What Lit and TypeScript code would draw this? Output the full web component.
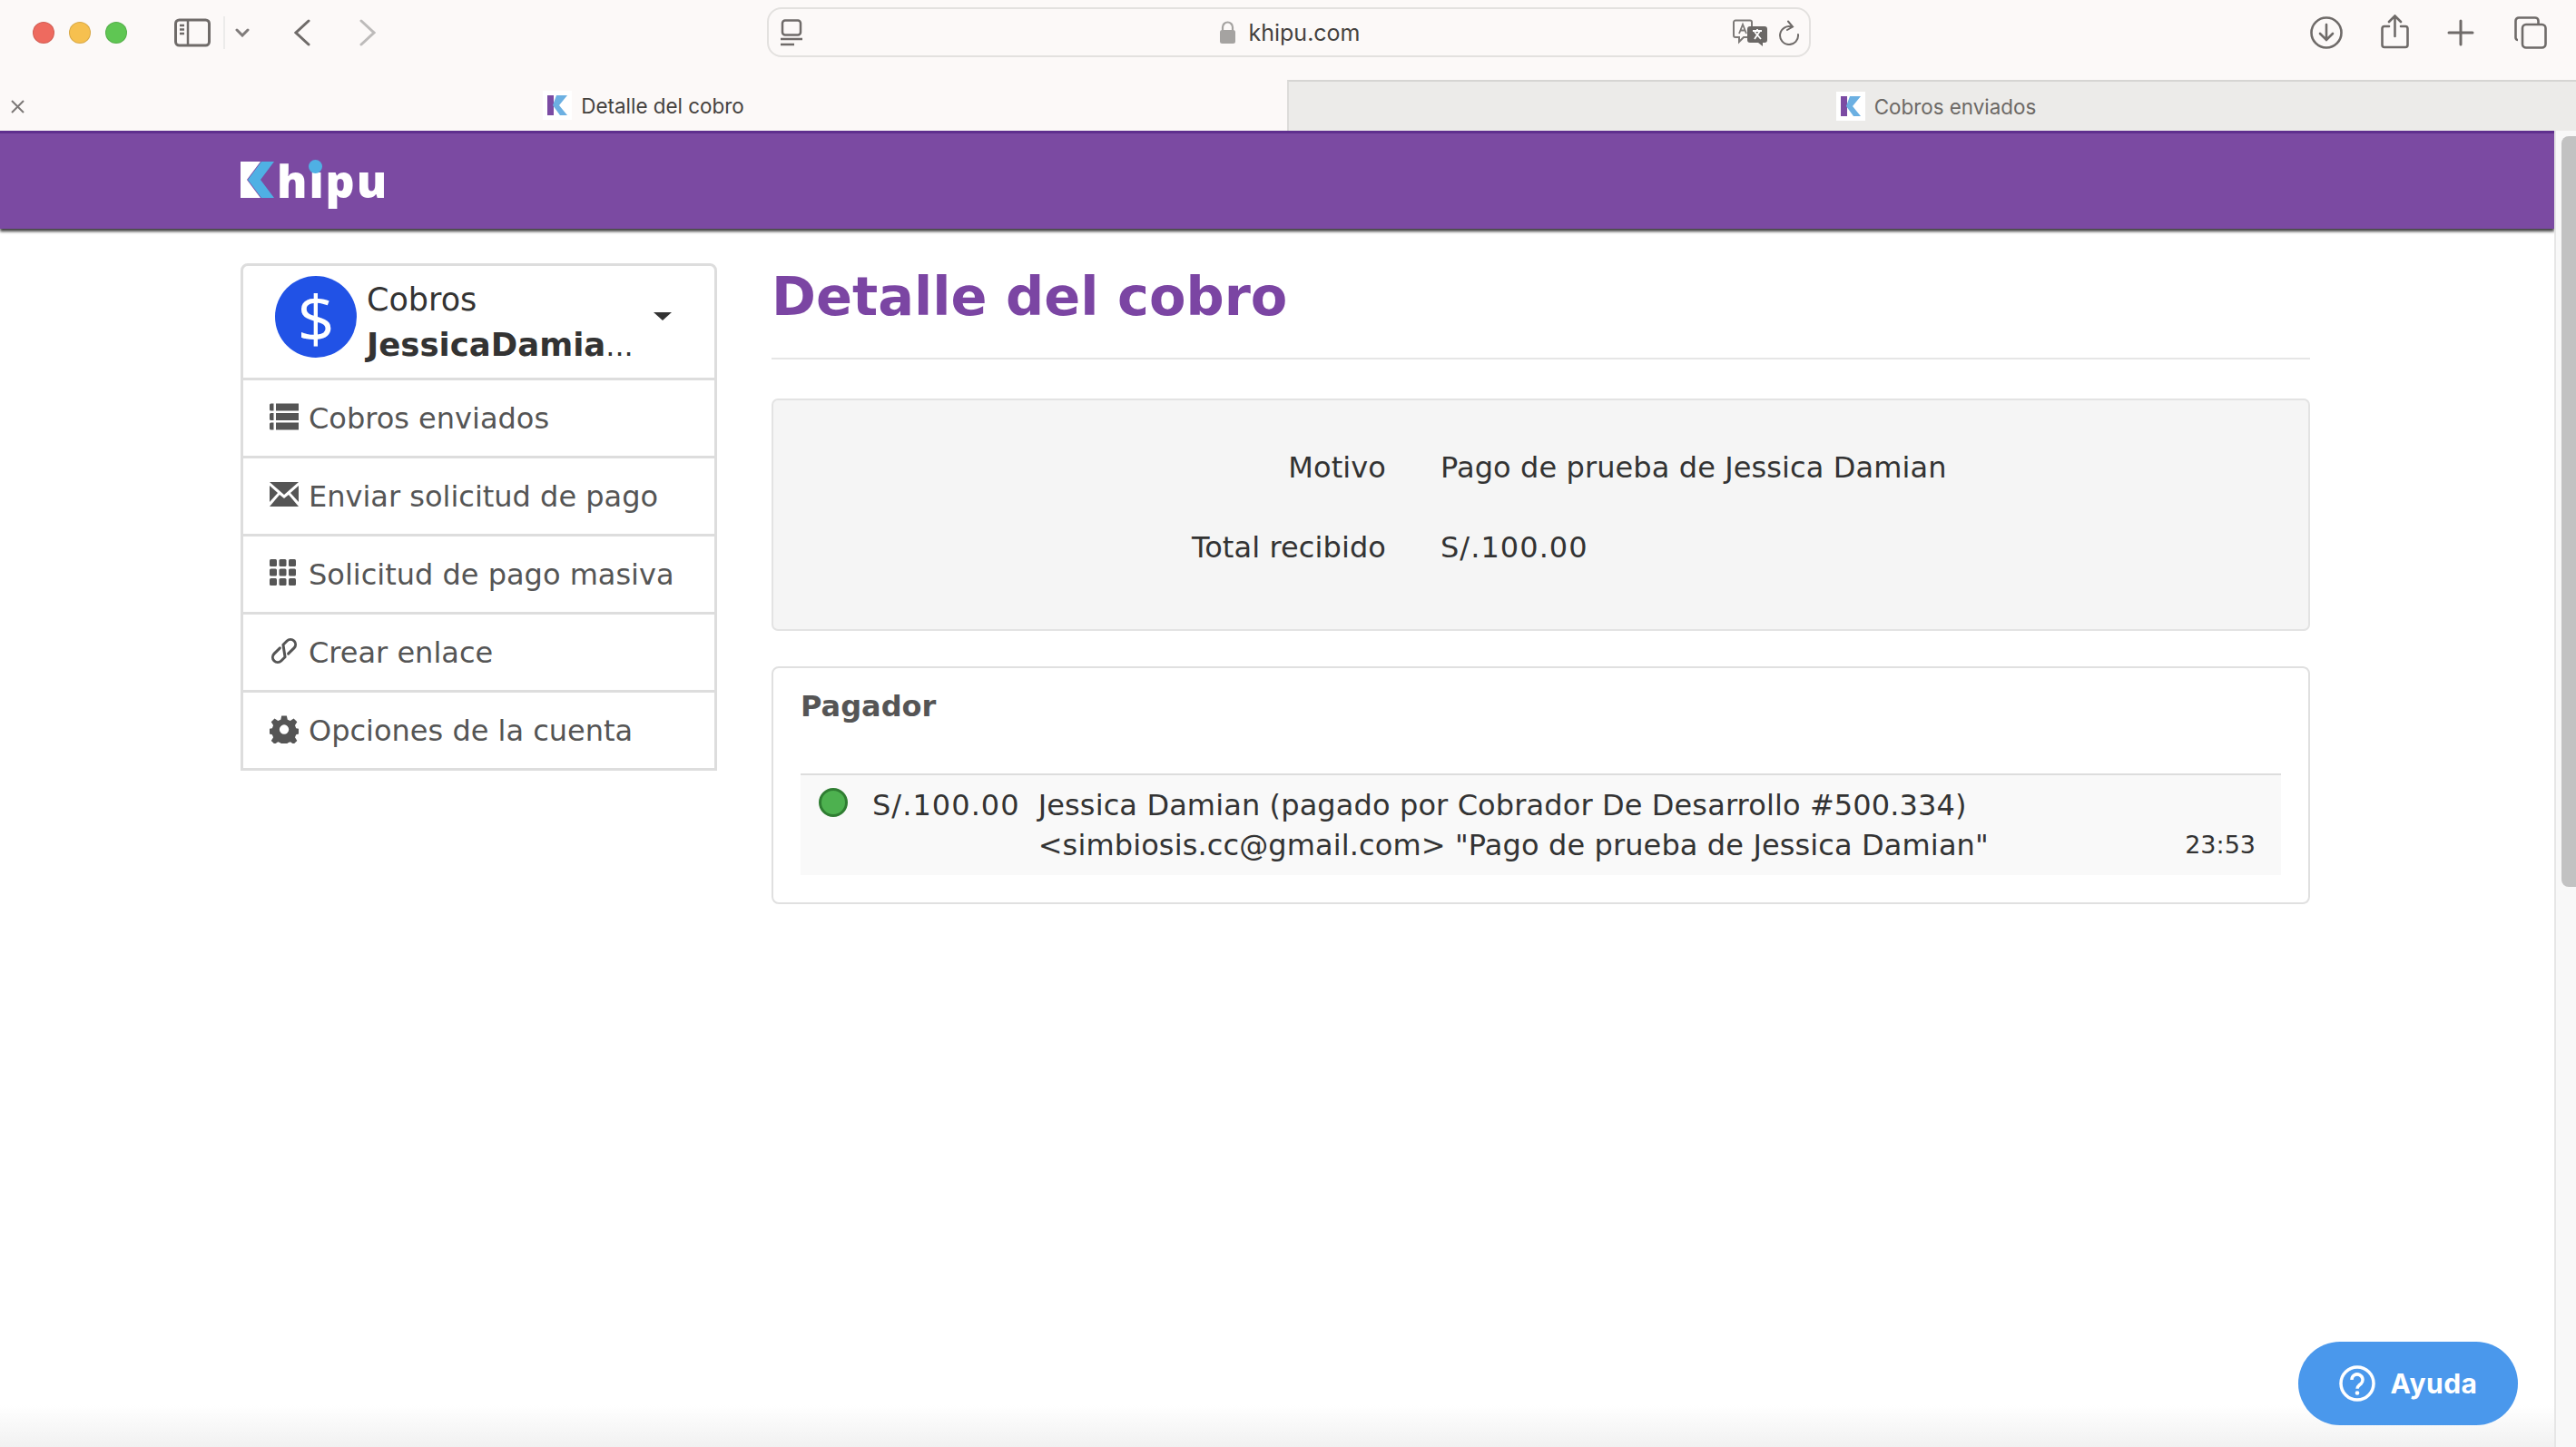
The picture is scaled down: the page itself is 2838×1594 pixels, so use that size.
import { LitElement, html, css, svg } from 'lit';
import { customElement } from 'lit/decorators.js';

const favicon = html`<svg class="favicon" viewBox="0 0 32 32">
  <rect width="32" height="32" fill="#fff"></rect>
  <path d="M5 5h7v22H5z" fill="#7b4ba3"></path>
  <path d="M15 5h12l-9 11 9 11h-8L11 16z" fill="#6cb0e2"></path>
</svg>`;

const menu = [
  {
    label: 'Cobros enviados',
    icon: svg`<path d="M0 1.5a1.500 1.500 0 0 1 1.500-1.500h3v8h-3A1.500 1.500 0 0 1 0 6.500zM7 0h25v8H7zM0 12a1.500 1.500 0 0 1 1.500-1.500h3v8h-3A1.500 1.500 0 0 1 0 17zM7 10.500h25v8H7zM0 22.500a1.500 1.500 0 0 1 1.500-1.500h3v8h-3A1.500 1.500 0 0 1 0 27.500zM7 21h25v8H7z" transform="translate(0 1.500)"></path>`,
  },
  {
    label: 'Enviar solicitud de pago',
    icon: svg`<path d="M0 2h32L16 16zM0 6l9 8-9 10zM32 6l-9 8 9 10zM11 16l5 4 5-4 11 13H0z"></path>`,
  },
  {
    label: 'Solicitud de pago masiva',
    icon: svg`<g><rect x="0" y="1" width="8" height="8" rx="1.500"></rect><rect x="10.500" y="1" width="8" height="8" rx="1.500"></rect><rect x="21" y="1" width="8" height="8" rx="1.500"></rect><rect x="0" y="11.500" width="8" height="8" rx="1.500"></rect><rect x="10.500" y="11.500" width="8" height="8" rx="1.500"></rect><rect x="21" y="11.500" width="8" height="8" rx="1.500"></rect><rect x="0" y="22" width="8" height="8" rx="1.500"></rect><rect x="10.500" y="22" width="8" height="8" rx="1.500"></rect><rect x="21" y="22" width="8" height="8" rx="1.500"></rect></g>`,
  },
  {
    label: 'Crear enlace',
    icon: svg`<g transform="rotate(-45 16 16)" fill="none" stroke="currentColor" stroke-width="3" stroke-linecap="round" stroke-linejoin="round"><path d="M15 10.500H6a5.500 5.500 0 0 0 0 11h6l8-11h6a5.500 5.500 0 0 1 0 11h-9"></path></g>`,
  },
  {
    label: 'Opciones de la cuenta',
    icon: svg`<path fill-rule="evenodd" d="M13 0h6l1 4.500 3.200 1.300 4-2.500 4 4-2.500 4 1.300 3.200 4.500 1v5.500l-4.500 1-1.300 3.200 2.500 4-4 4-4-2.500-3.200 1.300-1 4.500h-6l-1-4.500-3.200-1.300-4 2.500-4-4 2.500-4-1.300-3.200-4.500-1v-5.500l4.500-1 1.300-3.200-2.500-4 4-4 4 2.500L12 4.500zM16 10.500a5.500 5.500 0 1 0 0 11 5.500 5.500 0 0 0 0-11z" transform="translate(1 1.500) scale(.94)"></path>`,
  },
];

@customElement('app-root')
export class AppRoot extends LitElement {
  static styles = css`
    :host {
      display: block;
      width: 2838px;
      height: 1594px;
      position: relative;
      overflow: hidden;
      background: #fff;
      font-family: 'DejaVu Sans', Verdana, sans-serif;
      color: #333;
    }

    .toolbar {
      height: 88px;
      background: #fcf9f8;
      display: flex;
      align-items: flex-start;
    }
    .left-tools {
      width: 845px;
      height: 72px;
      padding-left: 36px;
      box-sizing: border-box;
      display: flex;
      align-items: center;
    }
    .lights { display: flex; gap: 16px; }
    .light {
      width: 24px;
      height: 24px;
      border-radius: 50%;
      box-sizing: border-box;
      border: 1px solid rgba(0, 0, 0, 0.12);
    }
    .red { background: #ee6a5f; }
    .yellow { background: #f6c04f; }
    .green { background: #5fc653; }
    .tool { color: #6f6b69; fill: none; stroke: currentColor; flex: none; }
    .sidebar-btn { width: 40px; height: 32px; margin-left: 52px; }
    .sep { width: 2px; height: 36px; background: #ecebea; margin-left: 14px; }
    .chev { width: 16px; height: 10px; margin-left: 11px; color: #807c7b; }
    .back { width: 18px; height: 30px; margin-left: 49px; }
    .forward { width: 18px; height: 30px; margin-left: 54px; color: #bdbbba; }

    .address {
      width: 1150px;
      height: 55px;
      margin-top: 8px;
      box-sizing: border-box;
      border: 2px solid #e3e1df;
      border-radius: 16px;
      display: grid;
      grid-template-columns: 1fr auto 1fr;
      align-items: center;
      padding: 0 10px 0 12px;
      font-family: Inter, 'Liberation Sans', sans-serif;
      font-size: 25px;
      color: #45423f;
    }
    .address-left { display: flex; }
    .address-center { display: flex; align-items: center; gap: 13px; }
    .address-right { display: flex; justify-content: flex-end; align-items: center; gap: 12px; }
    .reader { width: 26px; height: 30px; }
    .lock { width: 19px; height: 25px; }
    .translate { width: 38px; height: 30px; }
    .reload { width: 24px; height: 28px; }

    .right-tools {
      flex: 1;
      height: 72px;
      display: flex;
      align-items: center;
      justify-content: flex-end;
      padding-right: 32px;
      gap: 42px;
    }
    .dl { width: 36px; height: 36px; }
    .share { width: 31px; height: 38px; margin-top: -2px; }
    .plus { width: 30px; height: 30px; }
    .copies { width: 36px; height: 36px; margin-left: 2px; }

    .tabs {
      height: 56px;
      display: flex;
      background: #fcf9f8;
      font-family: Inter, 'Liberation Sans', sans-serif;
      font-size: 22.400px;
    }
    .tab {
      width: 1418px;
      position: relative;
      display: flex;
      align-items: center;
      justify-content: center;
      gap: 10px;
      color: #45423f;
    }
    .tab.inactive {
      width: 1420px;
      box-sizing: border-box;
      background: #ecebe9;
      color: #6c6966;
      border-left: 2px solid #dcdbd9;
      border-top: 2px solid #d6d5d3;
      padding-left: 8px;
    }
    .close {
      position: absolute;
      left: 12px;
      top: 22px;
      width: 15px;
      height: 15px;
      color: #7c7877;
    }
    .favicon { width: 32px; height: 32px; flex: none; }

    .viewport {
      height: 1450px;
      display: flex;
    }
    .page { flex: 1; min-width: 0; }
    .scrollbar {
      width: 24px;
      box-sizing: border-box;
      background: #f8f8f8;
      border-left: 2px solid #e6e6e6;
      padding: 6px 0 0 6px;
    }
    .thumb {
      height: 827px;
      background: #c2c2c2;
      border-radius: 8px 0 0 8px;
    }

    .navbar {
      height: 108px;
      background: #7b4aa2;
      border-top: 3px solid #5f2f8e;
      box-sizing: border-box;
      box-shadow: 0 3px 3px rgba(0, 0, 0, 0.75);
      padding-left: 265px;
      display: flex;
      align-items: flex-start;
    }
    .logo {
      display: flex;
      align-items: flex-start;
      margin-top: 31px;
      height: 60px;
      font-family: 'Open Sans', sans-serif;
      font-weight: 800;
      font-size: 50px;
      line-height: 54px;
      color: #fff;
    }
    .logo svg { width: 38px; height: 40px; flex: none; }
    .logo-text { margin-left: 2px; margin-top: -6px; display: block; letter-spacing: 1.900px; }
    .logo-i { position: relative; }
    .logo-i::after {
      content: '';
      position: absolute;
      left: 0;
      top: 11px;
      width: 15px;
      height: 15px;
      border-radius: 50%;
      background: #4fb0e4;
    }

    .content {
      display: grid;
      grid-template-columns: 525px 1695px;
      column-gap: 60px;
      padding: 37px 0 0 265px;
      align-items: start;
      font-size: 32px;
    }

    .side {
      margin-top: 1px;
      border: 3px solid #ddd;
      border-radius: 8px 8px 0 0;
      color: #555;
    }
    .account {
      height: 123px;
      box-sizing: border-box;
      display: flex;
      align-items: flex-start;
      padding: 11px 47px 0 35px;
      color: #333;
    }
    .avatar {
      width: 90px;
      height: 90px;
      border-radius: 50%;
      background: #2152e6;
      color: #fff;
      font-family: 'Open Sans', sans-serif;
      font-weight: 400;
      font-size: 72px;
      display: flex;
      align-items: center;
      justify-content: center;
      flex: none;
      margin-right: 11px;
    }
    .account-text { flex: 1; min-width: 0; margin-top: 2px; line-height: 49px; font-size: 35px; }
    .account-name { white-space: nowrap; font-size: 32px; }
    .account-name b { font-size: 35.500px; font-weight: 700; }
    .caret {
      width: 0;
      height: 0;
      margin-top: 40px;
      border-left: 10px solid transparent;
      border-right: 10px solid transparent;
      border-top: 9px solid #333;
      flex: none;
    }
    .item {
      height: 86px;
      box-sizing: border-box;
      border-top: 3px solid #ddd;
      display: flex;
      align-items: center;
      padding-left: 29px;
      gap: 11px;
      color: #555;
    }
    .item svg { width: 32px; height: 32px; fill: currentColor; flex: none; margin-top: -4px; }

    h1 {
      margin: 0;
      font-size: 59px;
      line-height: 76px;
      font-weight: 700;
      color: #7b45a3;
      padding-bottom: 29px;
      border-bottom: 2px solid #e6e6e6;
    }

    .well {
      margin-top: 43px;
      height: 256px;
      box-sizing: border-box;
      background: #f5f5f5;
      border: 2px solid #e3e3e3;
      border-radius: 7px;
      padding-top: 50px;
      display: grid;
      grid-template-columns: 675px 1fr;
      column-gap: 60px;
      grid-auto-rows: 88px;
      line-height: 49px;
      letter-spacing: 0.100px;
    }
    .well .key { text-align: right; }
    .money { letter-spacing: 1.050px; }

    .card {
      margin-top: 39px;
      height: 262px;
      box-sizing: border-box;
      border: 2px solid #e0e0e0;
      border-radius: 8px;
      padding: 0 30px 0 30px;
    }
    .card h2 {
      margin: 0;
      height: 116px;
      padding-top: 18px;
      box-sizing: border-box;
      font-size: 32px;
      line-height: 49px;
      font-weight: 700;
      color: #555;
    }
    .row {
      height: 112px;
      box-sizing: border-box;
      background: #f9f9f9;
      border-top: 2px solid #ddd;
      display: flex;
      padding: 11px 28px 0 20px;
      line-height: 44px;
    }
    .dot {
      width: 32px;
      height: 32px;
      box-sizing: border-box;
      border-radius: 50%;
      background: #4db14f;
      border: 3px solid #2f7d32;
      flex: none;
      margin-top: 3px;
    }
    .amount { margin-left: 27px; flex: none; }
    .desc { margin-left: 20px; flex: 1; min-width: 0; letter-spacing: 0.120px; }
    .time { font-size: 27px; align-self: flex-end; line-height: 34px; margin-bottom: 16px; }

    .fade {
      position: absolute;
      left: 0;
      right: 24px;
      bottom: 0;
      height: 46px;
      background: linear-gradient(to bottom, rgba(240, 240, 240, 0), #f1f1f1);
      pointer-events: none;
    }
    .help {
      position: absolute;
      left: 2532px;
      top: 1478px;
      width: 242px;
      height: 92px;
      border-radius: 46px;
      background: #4a98ec;
      color: #fff;
      display: flex;
      align-items: center;
      justify-content: center;
      gap: 17px;
      font-family: Inter, sans-serif;
      font-weight: 700;
      font-size: 30px;
      letter-spacing: 0.500px;
    }
    .help svg { width: 40px; height: 40px; flex: none; }
  `;

  render() {
    return html`
      <div class="toolbar">
        <div class="left-tools">
          <div class="lights">
            <span class="light red"></span>
            <span class="light yellow"></span>
            <span class="light green"></span>
          </div>
          <svg class="tool sidebar-btn" viewBox="0 0 40 32" stroke-width="3">
            <rect x="1.500" y="2" width="37" height="28" rx="4"></rect>
            <path d="M15 2v28M6 8h5M6 12.500h5M6 17h5" stroke-width="2.500"></path>
          </svg>
          <span class="sep"></span>
          <svg class="tool chev" viewBox="0 0 16 10" stroke-width="3" stroke-linecap="round"><path d="M2 2l6 6 6-6"></path></svg>
          <svg class="tool back" viewBox="0 0 18 30" stroke-width="3" stroke-linecap="round"><path d="M16 2L2 15l14 13"></path></svg>
          <svg class="tool forward" viewBox="0 0 18 30" stroke-width="3" stroke-linecap="round"><path d="M2 2l14 13L2 28"></path></svg>
        </div>
        <div class="address">
          <div class="address-left">
            <svg class="tool reader" viewBox="0 0 26 30" stroke-width="2.500">
              <rect x="3" y="1.500" width="20" height="16" rx="3"></rect>
              <path d="M1 22h24M1 28h15"></path>
            </svg>
          </div>
          <div class="address-center">
            <svg class="lock" viewBox="0 0 19 25">
              <path d="M4 11V7a5.500 5.500 0 0 1 11 0v4" fill="none" stroke="#a5a3a1" stroke-width="2.200"></path>
              <rect x="1" y="10" width="17" height="15" rx="2.500" fill="#a5a3a1"></rect>
            </svg>
            <span>khipu.com</span>
          </div>
          <div class="address-right">
            <svg class="translate" viewBox="0 0 38 30">
              <path d="M3 1.500h16a2 2 0 0 1 2 2V18a2 2 0 0 1-2 2h-7l-5 5v-5H3a2 2 0 0 1-2-2V3.500a2 2 0 0 1 2-2z" fill="#fcf9f8" stroke="#7d7a78" stroke-width="2"></path>
              <path d="M7 16l4-10 4 10M8.500 12.500h5" fill="none" stroke="#7d7a78" stroke-width="1.800"></path>
              <path d="M19 8h16a3 3 0 0 1 3 3v12a3 3 0 0 1-3 3h-2v4l-5-4h-9a3 3 0 0 1-3-3V11a3 3 0 0 1 3-3z" fill="#6b6866"></path>
              <path d="M22 13h10M27 11v2M24 22l6-9M24 14l7 8" fill="none" stroke="#fff" stroke-width="1.800"></path>
            </svg>
            <svg class="tool reload" viewBox="0 0 24 28" stroke-width="2" stroke-linecap="round">
              <path d="M15 7.500A10 10 0 1 0 22 16M11 1.500l5 6-6 3.500"></path>
            </svg>
          </div>
        </div>
        <div class="right-tools">
          <svg class="tool dl" viewBox="0 0 36 36" stroke-width="2.600">
            <circle cx="18" cy="18" r="16.500"></circle>
            <path d="M18 9v17M11 19l7 7 7-7" stroke-linecap="round"></path>
          </svg>
          <svg class="tool share" viewBox="0 0 31 38" stroke-width="2.600">
            <path d="M9 13H4a2.500 2.500 0 0 0-2.500 2.500v18A2.500 2.500 0 0 0 4 36h23a2.500 2.500 0 0 0 2.500-2.500v-18A2.500 2.500 0 0 0 27 13h-5M15.500 24V2M9 8l6.500-6.500L22 8" stroke-linecap="round"></path>
          </svg>
          <svg class="tool plus" viewBox="0 0 30 30" stroke-width="3" stroke-linecap="round"><path d="M15 2v26M2 15h26"></path></svg>
          <svg class="tool copies" viewBox="0 0 36 36" stroke-width="2.600">
            <path d="M4 26a2.500 2.500 0 0 1-2.500-2.500V5A3.500 3.500 0 0 1 5 1.500h18A3.500 3.500 0 0 1 26.500 5v3"></path>
            <rect x="9" y="9" width="25.500" height="25.500" rx="4"></rect>
          </svg>
        </div>
      </div>

      <div class="tabs">
        <div class="tab">
          <svg class="tool close" viewBox="0 0 15 15" stroke-width="2"><path d="M1 1l13 13M14 1L1 14"></path></svg>
          ${favicon}<span>Detalle del cobro</span>
        </div>
        <div class="tab inactive">${favicon}<span>Cobros enviados</span></div>
      </div>

      <div class="viewport">
        <div class="page">
          <div class="navbar">
            <div class="logo" aria-label="Khipu">
              <svg viewBox="0 0 38 40">
                <path d="M0 0h22L7 20l15 20H0z" fill="#fff"></path>
                <path d="M23 0h14L22 20l15 20H23L8 20z" fill="#4fb0e4"></path>
              </svg>
              <span class="logo-text">h<span class="logo-i">i</span>pu</span>
            </div>
          </div>

          <div class="content">
            <aside class="side">
              <div class="account">
                <div class="avatar">$</div>
                <div class="account-text">
                  <div>Cobros</div>
                  <div class="account-name"><b>JessicaDamia</b>...</div>
                </div>
                <span class="caret"></span>
              </div>
              ${menu.map(m => html`
                <div class="item">
                  <svg viewBox="0 0 32 32">${m.icon}</svg>
                  <span>${m.label}</span>
                </div>
              `)}
            </aside>

            <main>
              <h1>Detalle del cobro</h1>
              <div class="well">
                <div class="key">Motivo</div><div>Pago de prueba de Jessica Damian</div>
                <div class="key">Total recibido</div><div class="money">S/.100.00</div>
              </div>
              <section class="card">
                <h2>Pagador</h2>
                <div class="row">
                  <span class="dot"></span>
                  <span class="amount money">S/.100.00</span>
                  <span class="desc">Jessica Damian (pagado por Cobrador De Desarrollo #500.334)<br>&lt;simbiosis.cc@gmail.com&gt; "Pago de prueba de Jessica Damian"</span>
                  <span class="time">23:53</span>
                </div>
              </section>
            </main>
          </div>
        </div>
        <div class="scrollbar"><div class="thumb"></div></div>
      </div>

      <div class="fade"></div>
      <div class="help">
        <svg viewBox="0 0 40 40">
          <circle cx="20" cy="20" r="18" fill="none" stroke="#fff" stroke-width="3.500"></circle>
          <path d="M14 16a6 6 0 1 1 9.500 4.800c-2 1.500-3.500 2.500-3.500 5" fill="none" stroke="#fff" stroke-width="3.500"></path>
          <circle cx="20" cy="30.500" r="2.300" fill="#fff"></circle>
        </svg>
        <span>Ayuda</span>
      </div>
    `;
  }
}
